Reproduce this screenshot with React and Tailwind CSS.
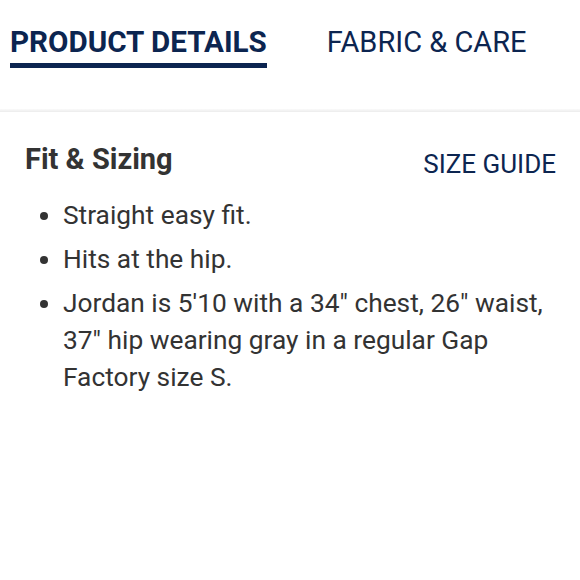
export default function App() {
  const items = [
    'Straight easy fit.',
    'Hits at the hip.',
    'Jordan is 5\'10 with a 34" chest, 26" waist, 37" hip wearing gray in a regular Gap Factory size S.',
  ]

  return (
    <div className="w-[580px] h-[580px] bg-white font-['Roboto',sans-serif] overflow-hidden">
      <div className="flex items-start gap-[60px] pl-[10px] pt-[25px] h-[109px]">
        <button className="flex flex-col text-[#0c2550]">
          <span className="text-[29.6px] leading-[34px] font-bold">PRODUCT DETAILS</span>
          <span className="mt-[4px] h-[5px] bg-[#0c2550]"></span>
        </button>
        <button className="text-[29px] leading-[34px] text-[#0c2550]">FABRIC &amp; CARE</button>
      </div>
      <div className="h-[3px] bg-gradient-to-b from-[#fafafa] to-[#ececec]"></div>

      <div className="px-[25px] pt-[31px]">
        <div className="flex items-start justify-between">
          <h2 className="text-[29px] leading-[33px] font-bold text-[#333333]">Fit &amp; Sizing</h2>
          <a className="mt-[7px] text-[26px] leading-[29px] text-[#0c2550] mr-[-1px]">SIZE GUIDE</a>
        </div>
        <ul className="mt-[18px] flex flex-col gap-[7px]">
          {items.map((t, i) => (
            <li key={i} className="flex items-start text-[26.3px] leading-[37px] text-[#333333]">
              <span className="w-[38px] shrink-0 flex justify-center pt-[15px]">
                <span className="w-[8px] h-[8px] rounded-full bg-[#333333]"></span>
              </span>
              <span>{t}</span>
            </li>
          ))}
        </ul>
      </div>
    </div>
  )
}
